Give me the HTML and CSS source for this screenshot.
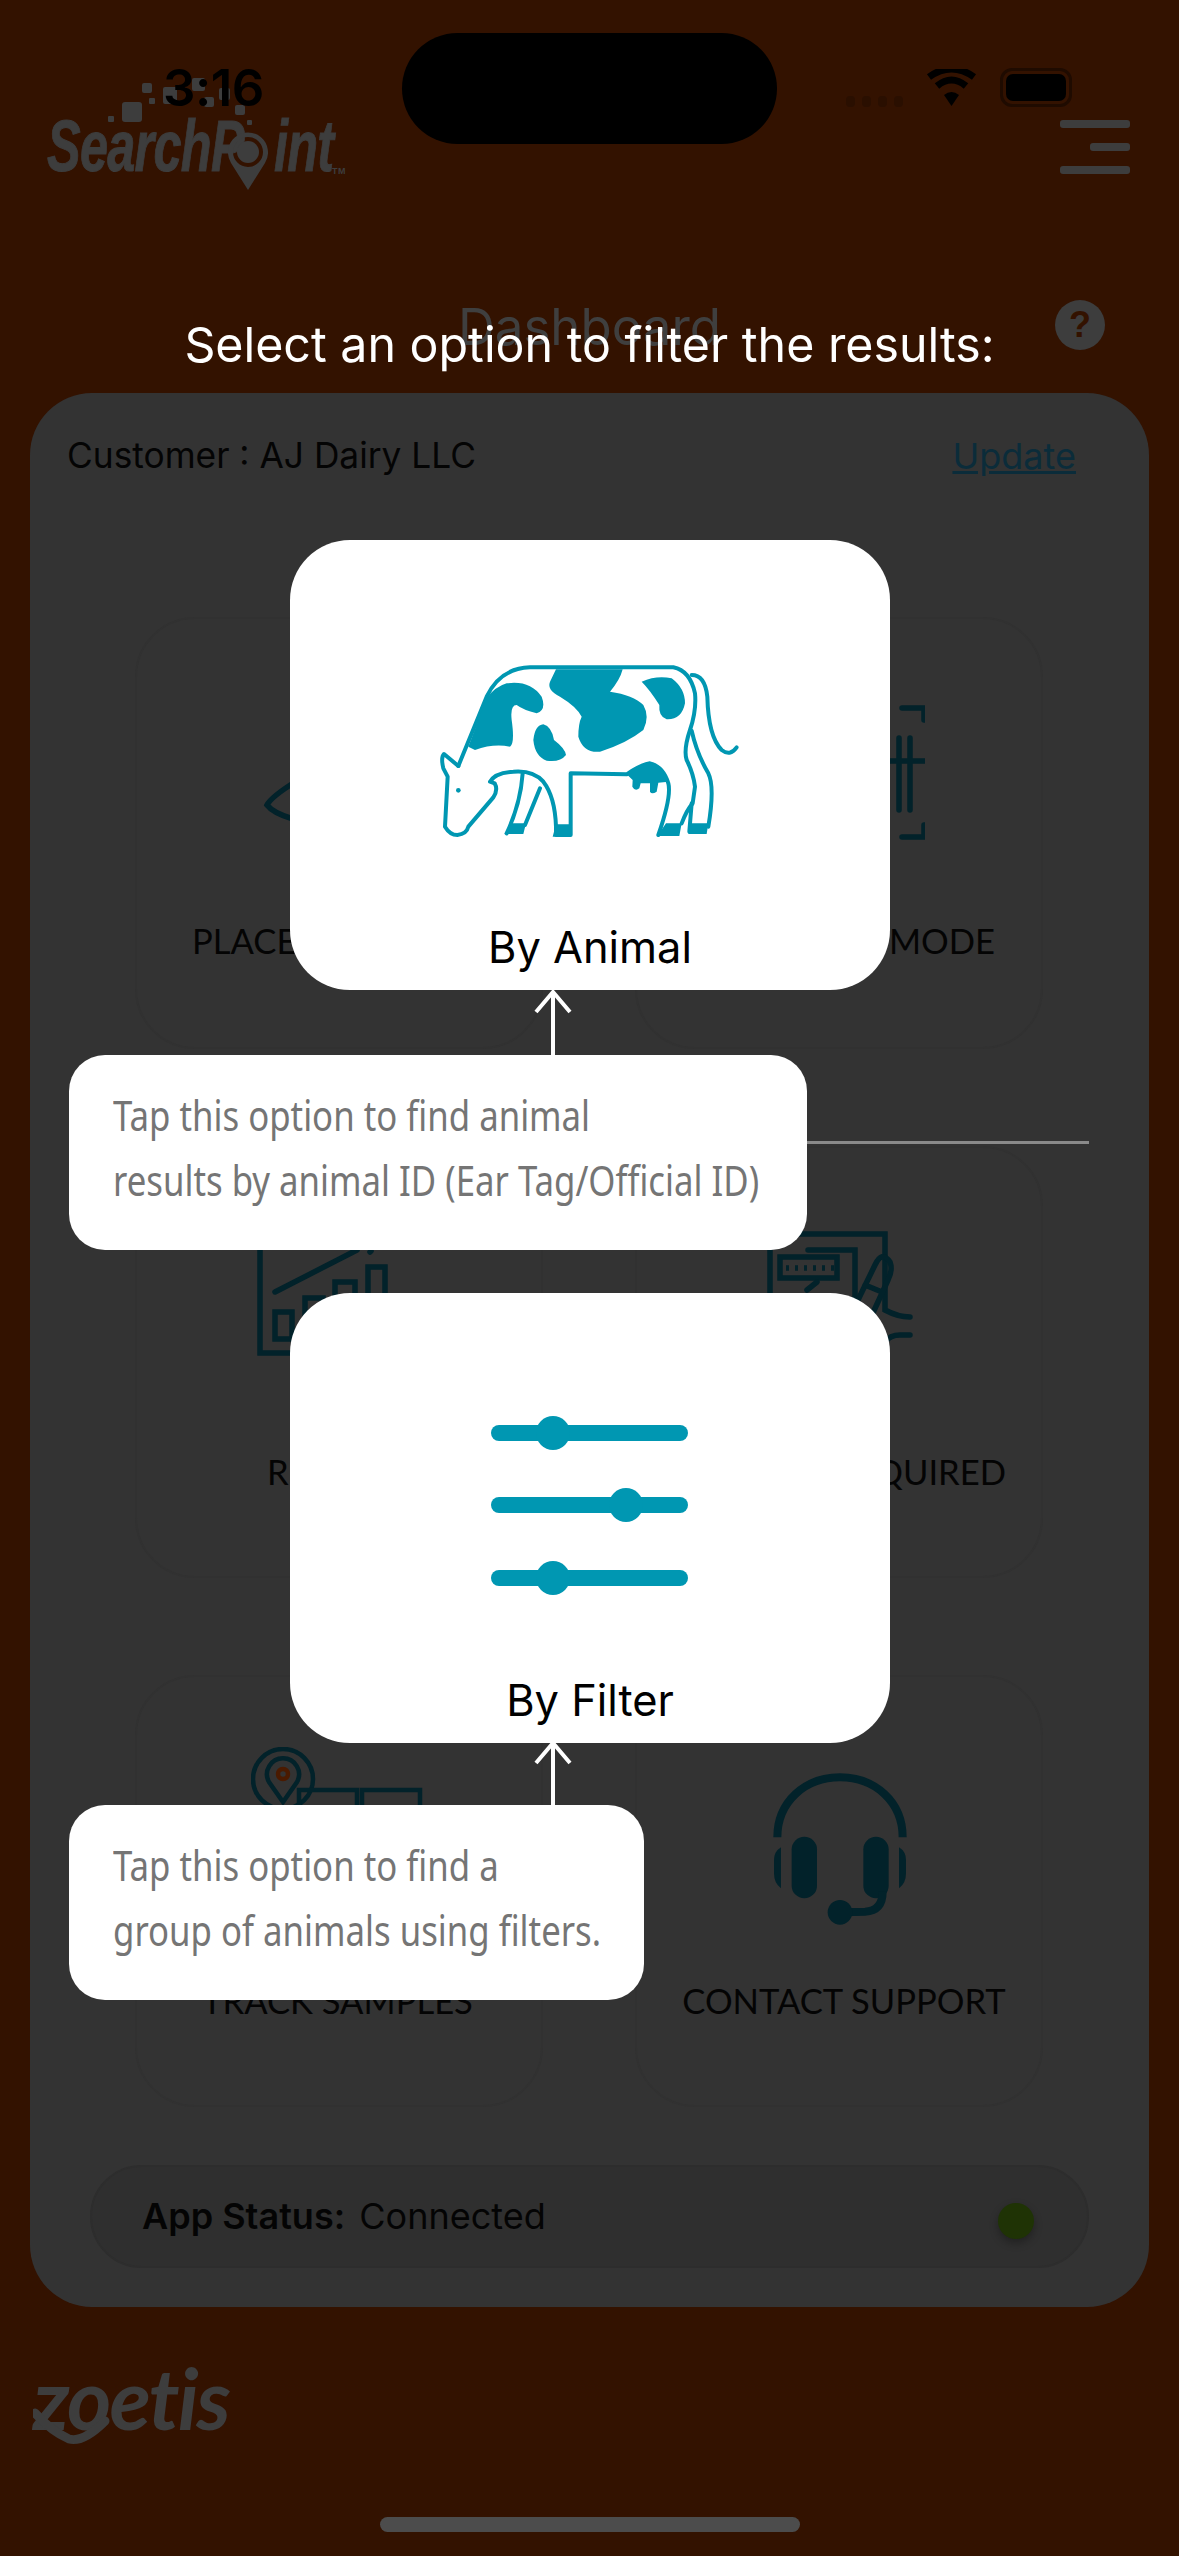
FILE: index.html
```html
<!DOCTYPE html>
<html lang="en">
<head>
<meta charset="utf-8">
<title>SearchPoint Dashboard</title>
<link rel="stylesheet" href="styles.css">
</head>
<body>
<div class="screen">
  <header class="header">
    <div class="logo-row">
      <div class="logo">
        <svg class="logo-dots" viewBox="0 0 300 60" width="300" height="60" aria-hidden="true">
          <rect x="75" y="24" width="20" height="20" rx="3"/><rect x="95" y="5" width="10" height="10" rx="2"/>
          <rect x="102" y="20" width="6" height="6" rx="1"/><rect x="116" y="9" width="14" height="17" rx="2"/>
          <rect x="145" y="0" width="13" height="13" rx="2"/><rect x="157" y="19" width="10" height="10" rx="2"/>
          <rect x="172" y="10" width="11" height="12" rx="2"/><rect x="188" y="27" width="10" height="10" rx="2"/>
          <rect x="61" y="38" width="6" height="6" rx="1"/><rect x="200" y="42" width="5" height="5" rx="1"/>
        </svg>
        <span class="logo-text">SearchP<span class="logo-o">o</span>int</span><span class="logo-tm">TM</span>
        <svg class="logo-pin" viewBox="0 0 40 58" width="40" height="58" aria-hidden="true">
          <path d="M20 58 L3 31 A20 20 0 1 1 37 31 Z M20 5 A15 15 0 1 0 20 35 A15 15 0 1 0 20 5 Z" fill-rule="evenodd"/>
          <circle cx="20" cy="20" r="11"/>
        </svg>
      </div>
      <div class="menu"><span class="bar"></span><span class="bar bar-short"></span><span class="bar"></span></div>
    </div>
    <div class="title-row">
      <span></span>
      <h1 class="page-title">Dashboard</h1>
      <span class="help">?</span>
    </div>
  </header>

  <main class="panel">
    <div class="customer-row">
      <span>Customer : AJ Dairy LLC</span>
      <a class="update">Update</a>
    </div>
    <div class="grid">
      <div class="row">
        <div class="tile">
          <div class="slot">
            <svg class="icon icon-place" viewBox="0 0 60 50" width="60" height="50"><path d="M34 3 Q10 18 6 26 Q12 34 32 40"/></svg>
          </div>
          <div class="label label-place label-top">PLACE ORDER</div>
        </div>
        <div class="tile">
          <div class="slot">
            <svg class="icon icon-scan" viewBox="0 0 100 140" width="100" height="140">
              <path d="M77 5 H99 V17 M77 134 H99 V122 M74 35 V107 M85 35 V107 M30 58 H100"/>
            </svg>
          </div>
          <div class="label label-mode label-top">SCAN MODE</div>
        </div>
      </div>
      <div class="divider"></div>
      <div class="row">
        <div class="tile">
          <div class="slot">
            <svg class="icon icon-chart" viewBox="0 0 140 130" width="140" height="130">
              <path d="M5 0 V123 H100"/>
              <path d="M20 62 L102 20 M115 22 L116 21"/>
              <rect x="20" y="82" width="17" height="27"/><rect x="50" y="68" width="18" height="40"/>
              <rect x="80" y="52" width="20" height="50"/><rect x="113" y="37" width="17" height="60"/>
            </svg>
          </div>
          <div class="label label-results">RESULTS</div>
        </div>
        <div class="tile">
          <div class="slot">
            <svg class="icon icon-doc" viewBox="0 0 160 120" width="160" height="120">
              <path d="M10 4 V120 M10 4 H125 V80 Q138 87 150 87 M150 105 H140 Q130 105 125 112"/>
              <path d="M48 20 H95 V80"/>
              <rect x="20" y="27" width="57" height="21"/>
              <path class="dots" d="M26 38 H74"/>
              <path d="M97 72 L115 35 Q122 20 130 32 Q133 40 128 50 L112 85 M105 55 L122 62 M47 60 L57 52"/>
            </svg>
          </div>
          <div class="label label-required">ACTION REQUIRED</div>
        </div>
      </div>
      <div class="row row-last">
        <div class="tile">
          <div class="slot">
            <svg class="icon icon-track" viewBox="0 0 190 90" width="190" height="90">
              <circle cx="32" cy="32" r="30"/>
              <path d="M32 55 L18 35 A16 16 0 1 1 46 35 Z"/>
              <circle class="track-dot" cx="32" cy="27" r="5"/>
              <rect x="48" y="43" width="58" height="50"/><rect x="111" y="43" width="58" height="50"/>
            </svg>
          </div>
          <div class="label label-track">TRACK SAMPLES</div>
        </div>
        <div class="tile">
          <div class="slot">
            <svg class="icon icon-headset" viewBox="0 0 600 540" width="200" height="180">
              <path class="hs-arc" d="M112 232 C112 125 195 52 300 52 C405 52 488 125 488 232"/>
              <rect class="hs-fill" x="155" y="230" width="76" height="185" rx="38"/>
              <rect class="hs-fill" x="370" y="230" width="76" height="185" rx="38"/>
              <path class="hs-arc" d="M428 395 Q428 452 375 455 L310 457"/>
              <circle class="hs-fill" cx="300" cy="457" r="37"/>
              <path class="hs-fill" d="M123 262 V385 Q102 370 102 340 V300 Q102 275 123 262 Z"/>
              <path class="hs-fill" d="M477 262 V385 Q498 370 498 340 V300 Q498 275 477 262 Z"/>
            </svg>
          </div>
          <div class="label label-contact">CONTACT SUPPORT</div>
        </div>
      </div>
    </div>
    <div class="app-status">
      <span class="status-text"><b>App Status:</b> Connected</span>
      <span class="status-dot"></span>
    </div>
  </main>

  <footer class="footer">
    <div class="zoetis">
      <span class="zoetis-text">zoetis</span>
      <svg class="zoetis-swoosh" viewBox="0 0 100 50" width="100" height="50" aria-hidden="true"><path d="M2 16 Q18 34 36 42 Q50 46 72 24"/></svg>
    </div>
  </footer>

  <!-- system chrome -->
  <div class="clock">3:16</div>
  <div class="island"></div>
  <div class="signal"><i></i><i></i><i></i><i></i></div>
  <svg class="wifi" viewBox="0 0 51 37" width="51" height="37" aria-hidden="true">
    <path d="M25.5 37 L18 26 Q25.5 20 33 26 Z"/>
    <path class="wifi-arc" d="M11 17 Q25.5 5 40 17"/>
    <path class="wifi-arc" d="M3 8 Q25.5 -8 48 8" />
  </svg>
  <div class="battery"><span class="battery-fill"></span></div>
  <div class="home-bar"></div>

  <!-- coach marks -->
  <div class="coach-title">Select an option to filter the results:</div>

  <section class="option option-animal">
    <svg class="cow" viewBox="0 0 1080 660" width="360" height="220" aria-hidden="true">
      <g class="cow-line">
        <path d="M175 378 L132 342 Q122 352 130 385 L143 410 L135 560 Q150 585 172 585 Q200 582 205 560 L280 472 Q295 450 284 430 L270 425 Q285 398 340 395 Q400 390 430 425 Q465 470 468 560 V585 H512 V400 L680 403 Q720 375 750 370 Q790 380 805 430 Q815 470 775 585"/>
        <path d="M175 378 L260 170 Q300 85 390 82 H820 Q870 92 885 160 Q890 210 870 270 Q850 330 860 360 Q880 400 885 440 L878 490 Q860 510 845 550"/>
        <path d="M875 272 Q890 340 925 400 Q945 440 925 560"/>
        <path d="M875 490 L868 575"/>
        <path d="M875 105 Q915 105 922 170 Q925 290 965 330 Q990 350 1010 322"/>
        <path d="M368 400 Q362 490 320 580 M420 445 L375 555"/>
      </g>
      <g class="cow-fill">
        <path d="M205 320 L260 175 Q285 140 320 130 Q390 120 425 170 Q440 210 410 220 Q370 210 350 195 Q330 195 335 240 Q345 310 330 320 Q280 310 225 330 Z"/>
        <path d="M468 88 H668 Q660 120 630 155 Q700 165 730 195 Q750 230 730 270 Q680 310 600 335 Q550 340 535 290 Q535 250 545 230 Q530 200 480 170 Q440 150 450 125 Z"/>
        <path d="M430 253 Q455 260 462 300 Q495 325 498 345 Q480 368 440 362 Q405 350 400 300 Q405 255 430 253 Z"/>
        <path d="M725 125 Q770 105 815 115 Q855 145 855 190 Q845 240 800 238 Q775 230 778 195 Q750 150 725 125 Z"/>
        <path d="M680 403 Q720 370 750 367 Q790 375 805 425 L775 428 L770 455 Q755 465 750 455 L750 430 L722 430 L718 445 Q705 455 697 440 L698 420 Z"/>
        <path d="M313 582 L335 550 H378 L370 582 Z M458 590 L468 553 H512 V590 Z M772 588 L798 550 H845 L838 588 Z M865 582 L872 550 H925 L920 582 Z"/>
        <circle cx="175" cy="451" r="7"/>
      </g>
    </svg>
    <div class="option-label">By Animal</div>
  </section>
  <svg class="arrow arrow-one" viewBox="0 0 40 66" width="40" height="66" aria-hidden="true"><path d="M20 66 V2 M3 22 L20 2 L37 22"/></svg>
  <div class="tip tip-one"><span class="tip-text">Tap this option to find animal<br>results by animal ID (Ear Tag/Official ID)</span></div>

  <section class="option option-filter">
    <svg class="sliders" viewBox="0 0 197 190" width="197" height="190" aria-hidden="true">
      <rect y="17" width="197" height="16" rx="8"/><circle cx="62" cy="25" r="17"/>
      <rect y="89" width="197" height="16" rx="8"/><circle cx="135" cy="97" r="17"/>
      <rect y="162" width="197" height="16" rx="8"/><circle cx="62" cy="170" r="17"/>
    </svg>
    <div class="option-label">By Filter</div>
  </section>
  <svg class="arrow arrow-two" viewBox="0 0 40 66" width="40" height="66" aria-hidden="true"><path d="M20 66 V2 M3 22 L20 2 L37 22"/></svg>
  <div class="tip tip-two"><span class="tip-text">Tap this option to find a<br>group of animals using filters.</span></div>
</div>
</body>
</html>
```

FILE: styles.css
```css
* { box-sizing: border-box; }
html, body { margin: 0; padding: 0; }
body { background: #331200; font-family: "Inter", "Liberation Sans", sans-serif; }
.screen { position: relative; width: 1179px; height: 2556px; overflow: hidden; background: #331200; display: flex; flex-direction: column; }

/* header */
.header { height: 393px; flex: none; }
.logo-row { height: 298px; padding: 120px 49px 0 47px; display: flex; justify-content: space-between; align-items: flex-start; }
.logo { position: relative; height: 60px; color: #3d3d3d; white-space: nowrap; }
.logo-dots { position: absolute; left: 0; top: -42px; fill: #3d3d3d; }
.logo-text { display: inline-block; font: italic 700 72px/60px "Liberation Sans", sans-serif; transform: translateY(-4px) scaleX(.7); transform-origin: left center; letter-spacing: -1px; -webkit-text-stroke: 1px #3d3d3d; }
.logo-o { color: transparent; -webkit-text-stroke: 0; }
.logo-tm { position: absolute; left: 285px; top: 46px; font: 700 9px/10px "Liberation Sans", sans-serif; letter-spacing: .5px; }
.logo-pin { position: absolute; left: 181px; top: 12px; fill: #3d3d3d; }
.menu { width: 70px; display: flex; flex-direction: column; align-items: flex-end; gap: 15px; }
.bar { display: block; width: 70px; height: 8px; border-radius: 3px; background: #3d3d3d; }
.bar-short { width: 40px; }
.title-row { display: grid; grid-template-columns: 1fr auto 1fr; align-items: start; height: 95px; }
.page-title { margin: 0; font-size: 51px; line-height: 58px; font-weight: 400; color: #3f3f3f; }
.help { justify-self: end; margin: 2px 74px 0 0; width: 50px; height: 50px; border-radius: 50%; background: #3d3d3d; color: #331200; font: 700 36px/50px "Liberation Sans", sans-serif; text-align: center; }

/* panel */
.panel { flex: none; margin: 0 30px; height: 1914px; background: #333333; border-radius: 62px; padding: 41px 73px 0 37px; color: #040404; }
.customer-row { display: flex; justify-content: space-between; font-size: 35.3px; line-height: 44px; }
.update { color: #0b2c3a; text-decoration: underline; font-size: 36px; }
.grid { margin: 139px 0 0 68px; display: flex; flex-direction: column; }
.row { display: flex; gap: 92px; }
.row-last { margin-top: 97px; }
.tile { width: 408px; height: 432px; border: 2px solid #313131; border-radius: 60px; background: #333333; }
.slot { height: 304px; display: flex; align-items: flex-start; justify-content: flex-start; }
.label { text-align: center; font-family: "Lato", "Liberation Sans", sans-serif; font-size: 34.6px; line-height: 40px; white-space: nowrap; }
.label-top { margin-top: -2px; }
.label-place { text-align: left; padding-left: 55px; }
.label-mode { text-align: right; padding-right: 46px; }
.label-results { text-align: left; padding-left: 130px; }
.label-required { text-align: right; padding-right: 35px; }
.label-track { padding-right: 3px; }
.label-contact { padding-left: 10px; }
.divider { width: 999px; height: 3px; margin: 92px 0 2px -45px; background: #8a8a8a; }
.icon { flex: none; fill: none; stroke: #02222a; stroke-width: 5.5; stroke-linecap: round; }
.icon-place { margin: 160px 0 0 124px; }
.icon-scan { margin: 84px 0 0 188px; }
.icon-chart { margin: 82px 0 0 118px; }
.icon-doc { margin: 82px 0 0 123px; }
.icon-track { margin: 70px 0 0 114px; stroke-width: 4.5; }
.icon-headset { margin: 83px 0 0 103px; }
.hs-arc { stroke-width: 24; stroke-linecap: butt; }
.hs-fill { fill: #02222a; stroke: none; }
.track-dot { stroke: #4a1a00; }
.dots { stroke-dasharray: 3 6; stroke-linecap: butt; }
.app-status { width: 999px; height: 103px; margin: 58px 0 0 23px; border: 2px solid #2d2d2d; border-radius: 52px; background: #2f2f2f; display: flex; align-items: center; justify-content: space-between; padding: 0 53px 0 50px; }
.status-text { font-size: 36px; line-height: 44px; margin-top: -1px; }
.status-text b { font-weight: 600; margin-right: 4px; }
.status-dot { width: 36px; height: 36px; border-radius: 50%; background: #1f3305; box-shadow: 0 4px 8px rgba(0,0,0,.3); margin-top: 8px; }

/* footer */
.footer { padding: 60px 0 0 33px; }
.zoetis { position: relative; width: 196px; height: 73px; color: #3d3d3d; }
.zoetis-text { display: block; font: italic 700 85px/60px "Lato", "Liberation Sans", sans-serif; letter-spacing: -2px; }
.zoetis-swoosh { position: absolute; left: 0; top: 30px; fill: none; stroke: #3d3d3d; stroke-width: 9; stroke-linecap: round; }

/* system chrome */
.clock { position: absolute; left: 163px; top: 58px; font-size: 51px; line-height: 60px; font-weight: 600; color: #000; letter-spacing: -.5px; }
.island { position: absolute; left: 402px; top: 33px; width: 375px; height: 111px; border-radius: 56px; background: #000; }
.signal { position: absolute; left: 846px; top: 96px; display: flex; gap: 7px; }
.signal i { display: block; width: 9px; height: 11px; border-radius: 4px; background: #2a0f00; }
.wifi { position: absolute; left: 926px; top: 69px; fill: #000; }
.wifi-arc { fill: none; stroke: #000; stroke-width: 7; }
.battery { position: absolute; left: 1000px; top: 68px; width: 72px; height: 39px; border: 3px solid #1f0b00; border-radius: 12px; padding: 3px; }
.battery-fill { display: block; height: 100%; border-radius: 7px; background: #000; }
.home-bar { position: absolute; left: 380px; top: 2517px; width: 420px; height: 15px; border-radius: 8px; background: #4c4c4c; }

/* coach marks */
.coach-title { position: absolute; left: 0; right: 0; top: 316px; text-align: center; font-size: 48.3px; line-height: 58px; color: #fff; }
.option { position: absolute; left: 290px; width: 600px; height: 450px; background: #fff; border-radius: 60px; }
.option-animal { top: 540px; }
.option-filter { top: 1293px; }
.option-label { position: absolute; left: 0; right: 0; top: 379px; text-align: center; font-size: 43.4px; line-height: 56px; color: #000; }
.cow { position: absolute; left: 110px; top: 100px; }
.cow-line { fill: none; stroke: #0097b2; stroke-width: 12; stroke-linejoin: round; stroke-linecap: round; }
.cow-fill { fill: #0097b2; }
.sliders { position: absolute; left: 201px; top: 115px; fill: #0097b2; }
.arrow { position: absolute; left: 533px; fill: none; stroke: #fff; stroke-width: 4; }
.arrow-one { top: 990px; }
.arrow-two { top: 1741px; }
.tip { position: absolute; left: 69px; height: 195px; background: #fff; border-radius: 36px; padding: 28px 0 0 44px; color: #757575; font-family: "Noto Sans", "Open Sans", sans-serif; font-size: 41px; line-height: 65px; white-space: nowrap; }
.tip-text { display: block; transform: scaleX(.848); transform-origin: left center; }
.tip-one { top: 1055px; width: 738px; }
.tip-two { top: 1805px; width: 575px; }
```
